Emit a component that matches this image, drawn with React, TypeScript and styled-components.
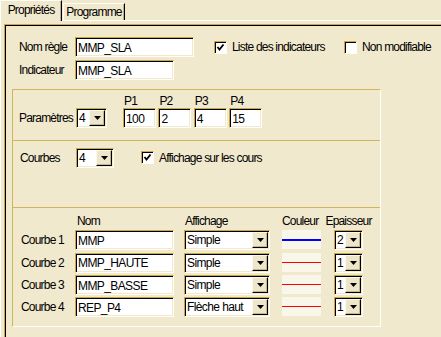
import React from "react";
import styled, { createGlobalStyle } from "styled-components";

const BG = "#f1e9cd";
const LIGHT = "#fffff7";
const GOLD = "#c9a646";
const LINE = "#d3b45e";

const GlobalStyle = createGlobalStyle`
  body {
    margin: 0;
    background: ${BG};
    font-family: "Liberation Sans", Arial, sans-serif;
    font-size: 12px;
    letter-spacing: -0.8px;
    color: #000;
    overflow: hidden;
  }
`;

const Window = styled.div`
  width: 441px;
  height: 337px;
  overflow: hidden;
  background: ${BG};
`;

const TabStrip = styled.div`
  display: flex;
  align-items: flex-end;
  height: 20px;
  position: relative;
  z-index: 1;
`;

const Tab = styled.div<{ $active?: boolean }>`
  box-sizing: border-box;
  width: 62px;
  height: ${({ $active }) => ($active ? "21px" : "17px")};
  margin-bottom: ${({ $active }) => ($active ? "-1px" : "0")};
  margin-left: ${({ $active }) => ($active ? "0" : "1px")};
  padding-top: ${({ $active }) => ($active ? "3px" : "2px")};
  background: ${BG};
  border-top: 1px solid ${LIGHT};
  border-left: 1px solid ${LIGHT};
  border-right: 1px solid #000;
  box-shadow: inset -1px 0 0 #bcb08c;
  text-align: center;
  line-height: 13px;
  white-space: nowrap;
`;

const TabBody = styled.div`
  box-sizing: border-box;
  height: 317px;
  border-top: 1px solid ${LIGHT};
  border-left: 1px solid ${LIGHT};
  padding: 3px 0 0 3px;
`;

const Panel = styled.div`
  box-sizing: border-box;
  width: 460px;
  height: 320px;
  border-top: 1px solid ${GOLD};
  border-left: 1px solid ${GOLD};
  box-shadow: inset 1px 1px 0 #000;
  padding: 12px 0 0 7px;
`;

const FormRow = styled.div<{ $mt?: number }>`
  display: flex;
  align-items: center;
  height: 20px;
  margin-top: ${({ $mt }) => $mt ?? 0}px;
  padding-left: 7px;
`;

const Label = styled.div<{ $w?: number; $pl?: number }>`
  width: ${({ $w }) => ($w ? `${$w}px` : "auto")};
  padding-left: ${({ $pl }) => $pl ?? 0}px;
  flex-shrink: 0;
  line-height: 20px;
  white-space: nowrap;
`;

const sunken = `
  box-sizing: border-box;
  height: 20px;
  border-top: 1px solid ${GOLD};
  border-left: 1px solid ${GOLD};
  border-bottom: 1px solid ${LIGHT};
  border-right: 1px solid ${LIGHT};
  box-shadow: inset 1px 1px 0 #000, inset -1px -1px 0 ${BG};
  background: #fff;
`;

const TextBox = styled.input<{ $w: number }>`
  ${sunken}
  width: ${({ $w }) => $w}px;
  margin: 0;
  padding: 1px 0 0 2px;
  font: 12px "Liberation Sans", Arial, sans-serif;
  letter-spacing: -0.6px;
  color: #000;
  outline: none;
`;

const SelectBox = styled.div<{ $w: number }>`
  ${sunken}
  width: ${({ $w }) => $w}px;
  display: flex;
  padding: 1px;
  flex-shrink: 0;
`;

const SelectValue = styled.div`
  flex: 1;
  padding-left: 1px;
  line-height: 17px;
  letter-spacing: -0.6px;
  white-space: nowrap;
  overflow: hidden;
`;

const DropButton = styled.div`
  box-sizing: border-box;
  width: 16px;
  height: 16px;
  flex-shrink: 0;
  background: #eee6ca;
  border-top: 1px solid #fbf8ec;
  border-left: 1px solid #fbf8ec;
  border-right: 1px solid #000;
  border-bottom: 1px solid #000;
  box-shadow: inset -1px -1px 0 #c2b68f;
  display: flex;
  align-items: center;
  justify-content: center;
`;

const CheckWrap = styled.div<{ $w?: number; $ml?: number }>`
  display: flex;
  align-items: center;
  gap: 5px;
  width: ${({ $w }) => ($w ? `${$w}px` : "auto")};
  margin-left: ${({ $ml }) => $ml ?? 0}px;
  flex-shrink: 0;
  white-space: nowrap;
`;

const CheckBox = styled.div`
  box-sizing: border-box;
  width: 13px;
  height: 13px;
  border-top: 1px solid ${GOLD};
  border-left: 1px solid ${GOLD};
  border-bottom: 1px solid ${LIGHT};
  border-right: 1px solid ${LIGHT};
  box-shadow: inset 1px 1px 0 #000;
  background: #fff;
  display: flex;
  align-items: center;
  justify-content: center;
`;

const Frame = styled.div`
  box-sizing: border-box;
  width: 369px;
  height: 238px;
  margin-top: 9px;
  border-top: 1px solid ${LINE};
  border-left: 1px solid ${LINE};
  border-right: 1px solid ${LIGHT};
  border-bottom: 1px solid ${LIGHT};
  display: flex;
  flex-direction: column;
`;

const Section = styled.div<{ $h: number; $pt?: number; $last?: boolean }>`
  height: ${({ $h }) => $h}px;
  border-bottom: ${({ $last }) => ($last ? "none" : `1px solid ${LINE}`)};
  padding: ${({ $pt }) => $pt ?? 7}px 0 0 6px;
`;

const ParamRow = styled.div`
  display: flex;
  align-items: flex-end;
`;

const ParamCols = styled.div`
  display: flex;
  gap: 2.4px;
  margin-left: 16px;
`;

const ParamCol = styled.div`
  display: flex;
  flex-direction: column;
`;

const PLabel = styled.div`
  height: 13px;
  line-height: 13px;
  padding-left: 1px;
`;

const CurveRow = styled.div`
  display: flex;
  align-items: center;
  height: 20px;
`;

const Grid = styled.div`
  display: grid;
  grid-template-columns: 55px 109px 98px 52px 29px;
  grid-template-rows: 13px;
  grid-auto-rows: 20px;
  row-gap: 2.4px;
  margin-left: 1px;
`;

const Head = styled.div<{ $pl?: number; $center?: boolean }>`
  line-height: 13px;
  padding-left: ${({ $pl }) => $pl ?? 0}px;
  display: flex;
  justify-content: ${({ $center }) => ($center ? "center" : "flex-start")};
  white-space: nowrap;
`;

const Swatch = styled.div`
  width: 39px;
  height: 19px;
  background: #f9f7ea;
  display: flex;
  align-items: center;
`;

const SwatchLine = styled.div<{ $color: string; $thick: number }>`
  width: 100%;
  height: ${({ $thick }) => $thick}px;
  background: ${({ $color }) => $color};
`;

const Arrow = () => (
  <svg width="7" height="4" viewBox="0 0 7 4">
    <polygon points="0,0 7,0 3.5,4" fill="#000" />
  </svg>
);

const Check = () => (
  <svg width="9" height="9" viewBox="0 0 9 9">
    <polyline points="1.5,4 3.5,6.5 7.5,1.5" fill="none" stroke="#000" strokeWidth="1.8" />
  </svg>
);

const Select = ({ w, value }: { w: number; value: string }) => (
  <SelectBox $w={w}>
    <SelectValue>{value}</SelectValue>
    <DropButton>
      <Arrow />
    </DropButton>
  </SelectBox>
);

const CheckField = ({ checked, text, w, ml }: { checked: boolean; text: string; w?: number; ml?: number }) => (
  <CheckWrap $w={w} $ml={ml}>
    <CheckBox>{checked && <Check />}</CheckBox>
    <span>{text}</span>
  </CheckWrap>
);

const params = ["100", "2", "4", "15"];

const curves = [
  { name: "MMP", mode: "Simple", color: "#0000ff", thick: 2, width: "2" },
  { name: "MMP_HAUTE", mode: "Simple", color: "#ff0000", thick: 1, width: "1" },
  { name: "MMP_BASSE", mode: "Simple", color: "#ff0000", thick: 1, width: "1" },
  { name: "REP_P4", mode: "Flèche haut", color: "#ff0000", thick: 1, width: "1" },
];

const App: React.FC = () => (
  <Window>
    <GlobalStyle />
    <TabStrip>
      <Tab $active>Propriétés</Tab>
      <Tab>Programme</Tab>
    </TabStrip>
    <TabBody>
      <Panel>
        <FormRow>
          <Label $w={56}>Nom règle</Label>
          <TextBox $w={119} defaultValue="MMP_SLA" />
          <CheckField checked text="Liste des indicateurs" w={130} ml={20} />
          <CheckField checked={false} text="Non modifiable" />
        </FormRow>
        <FormRow $mt={3}>
          <Label $w={56}>Indicateur</Label>
          <TextBox $w={99} defaultValue="MMP_SLA" />
        </FormRow>

        <Frame>
          <Section $h={49} $pt={5}>
            <ParamRow>
              <Label $w={57}>Paramètres</Label>
              <Select w={31} value="4" />
              <ParamCols>
                {params.map((p, i) => (
                  <ParamCol key={i}>
                    <PLabel>P{i + 1}</PLabel>
                    <TextBox $w={33} defaultValue={p} />
                  </ParamCol>
                ))}
              </ParamCols>
            </ParamRow>
          </Section>
          <Section $h={65}>
            <CurveRow>
              <Label $w={56} $pl={1}>Courbes</Label>
              <Select w={38} value="4" />
              <CheckField checked text="Affichage sur les cours" ml={27} />
            </CurveRow>
          </Section>
          <Section $h={122} $last>
            <Grid>
              <div />
              <Head $pl={2}>Nom</Head>
              <Head $pl={1}>Affichage</Head>
              <Head>Couleur</Head>
              <Head $center>Epaisseur</Head>
              {curves.map((c, i) => (
                <React.Fragment key={i}>
                  <Label $pl={1}>Courbe {i + 1}</Label>
                  <TextBox $w={99} defaultValue={c.name} />
                  <Select w={86} value={c.mode} />
                  <Swatch>
                    <SwatchLine $color={c.color} $thick={c.thick} />
                  </Swatch>
                  <Select w={29} value={c.width} />
                </React.Fragment>
              ))}
            </Grid>
          </Section>
        </Frame>
      </Panel>
    </TabBody>
  </Window>
);

export default App;
